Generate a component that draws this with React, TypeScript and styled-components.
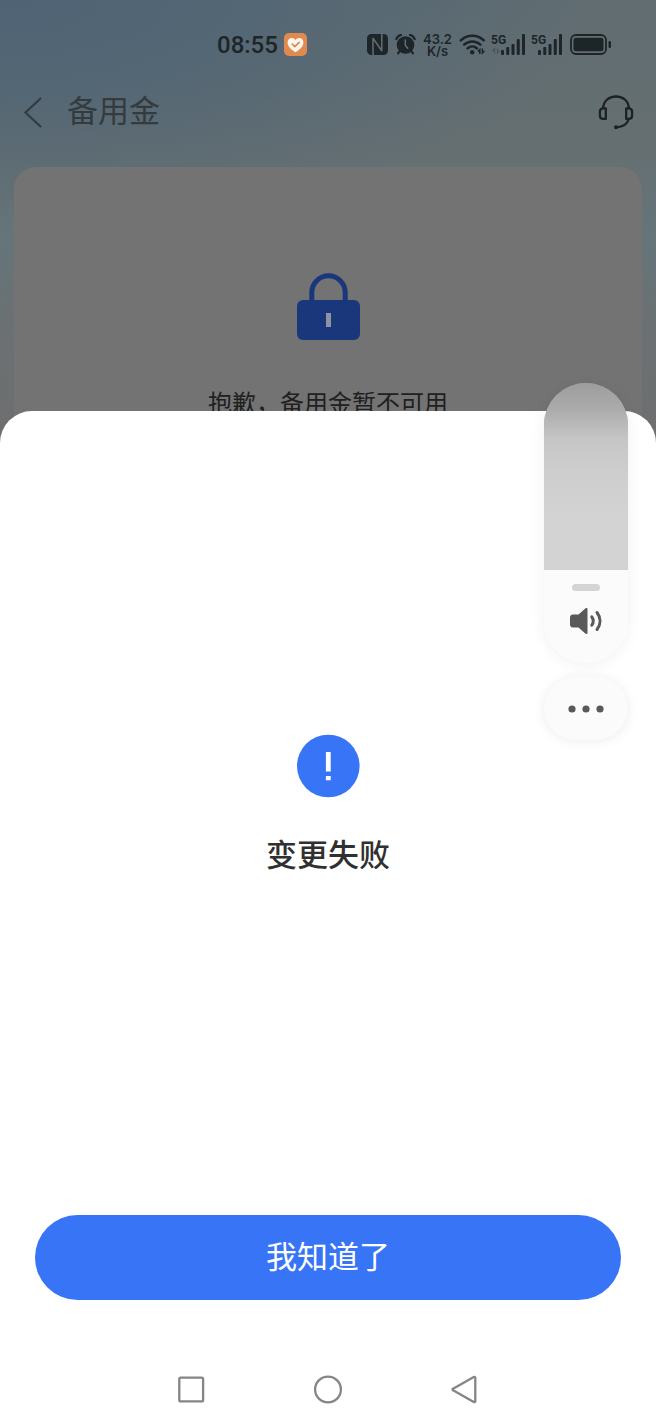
import React, { useState } from "react";
import styled, { createGlobalStyle } from "styled-components";

const GlobalStyle = createGlobalStyle`
  * { box-sizing: border-box; }
  body {
    margin: 0;
    font-family: "Noto Sans CJK SC", "Noto Sans", sans-serif;
  }
  button {
    margin: 0;
    padding: 0;
    border: 0;
    background: none;
    font: inherit;
    color: inherit;
    cursor: pointer;
  }
  svg { display: block; }
`;

const INK = "#1d2529";
const BLUE = "#3875f6";

const Screen = styled.div`
  position: relative;
  min-height: 100vh;
  overflow: hidden;
  background:
    radial-gradient(ellipse 600px 220px at 0 0, #4f6375 0%, rgba(80, 101, 117, 0.8) 40%, rgba(84, 106, 118, 0) 100%),
    linear-gradient(180deg, #616d71 0, #656f72 150px, #65757a 240px, #6b7072 330px, #6d6f70 420px);
`;

const StatusBar = styled.header`
  display: flex;
  align-items: center;
  justify-content: space-between;
  height: 88px;
  padding: 0 45px 0 217px;
  color: ${INK};
`;

const StatusGroup = styled.div`
  display: flex;
  align-items: center;
  gap: 6px;
`;

const Clock = styled.time`
  padding-top: 2px;
  font: 500 24px/28px Roboto, sans-serif;
`;

const Speed = styled.span`
  display: flex;
  flex-direction: column;
  align-items: center;
  width: 31px;
  padding-top: 2px;
  font: 600 13px/12px Inter, sans-serif;
`;

const SignalBox = styled.span`
  position: relative;
`;

const SignalLabel = styled.span`
  position: absolute;
  top: 0;
  left: 0;
  font: 700 12px/12px Roboto, sans-serif;
`;

const NavBar = styled.nav`
  display: flex;
  align-items: center;
  height: 48px;
  padding: 0 20px;
  color: #343b3f;
`;

const PageTitle = styled.h1`
  flex: 1;
  margin: 0 0 0 19px;
  padding-bottom: 6px;
  font-size: 31px;
  line-height: 42px;
  font-weight: 400;
`;

const Card = styled.section`
  display: flex;
  flex-direction: column;
  align-items: center;
  height: 420px;
  margin: 31px 14px 0;
  padding-top: 106px;
  border-radius: 22px;
  background: #737373;
`;

const CardText = styled.p`
  margin: 44px 0 0;
  font-size: 24px;
  line-height: 36px;
  color: #202020;
`;

const Overlay = styled.div`
  position: absolute;
  inset: 0;
  display: flex;
  flex-direction: column;
  padding-top: 411px;
`;

const Sheet = styled.section`
  flex: 1;
  display: flex;
  flex-direction: column;
  border-radius: 32px 32px 0 0;
  background: #fff;
`;

const Result = styled.div`
  flex: 1;
  display: flex;
  flex-direction: column;
  align-items: center;
  justify-content: center;
  gap: 31px;
  padding-bottom: 16px;
`;

const ResultTitle = styled.h2`
  margin: 0;
  font-size: 31px;
  line-height: 48px;
  font-weight: 500;
  color: #303030;
`;

const ConfirmButton = styled.button`
  height: 85px;
  margin: 0 35px;
  padding-bottom: 6px;
  border-radius: 43px;
  background: ${BLUE};
  color: #fff;
  font-size: 31px;
  line-height: 48px;
`;

const SystemNav = styled.nav`
  display: flex;
  justify-content: center;
  gap: 41px;
  height: 124px;
  padding-top: 54px;
`;

const SystemButton = styled.button`
  display: grid;
  place-items: center;
  width: 96px;
  height: 70px;
`;

const VolumePanel = styled.aside`
  position: absolute;
  top: 383px;
  right: 28px;
  display: flex;
  flex-direction: column;
  gap: 14px;
  width: 84px;
`;

const VolumePill = styled.div`
  position: relative;
  overflow: hidden;
  height: 280px;
  border-radius: 42px;
  background: linear-gradient(180deg, #9d9d9d 50%, #fbfbfb 50%);
`;

const VolumeShadow = styled.div`
  border-radius: 42px;
  box-shadow: 0 2px 16px rgba(0, 0, 0, 0.06);
`;

const VolumeEmpty = styled.div`
  height: 187px;
  background: linear-gradient(180deg, #9d9d9d 0, #aaaaaa 24px, #c6c6c6 56px, #cecece 90px, #d3d3d3 130px);
`;

const VolumeFill = styled.div`
  display: flex;
  flex-direction: column;
  align-items: center;
  gap: 16px;
  padding-top: 14px;
`;

const Handle = styled.span`
  width: 28px;
  height: 7px;
  border-radius: 4px;
  background: #d4d4d4;
`;

const VolumeRange = styled.input`
  position: absolute;
  inset: 0;
  width: 100%;
  height: 100%;
  margin: 0;
  opacity: 0;
  writing-mode: vertical-lr;
  direction: rtl;
`;

const MoreButton = styled.button`
  display: grid;
  place-items: center;
  height: 63px;
  border-radius: 32px;
  background: #fbfbfb;
  box-shadow: 0 1px 12px rgba(0, 0, 0, 0.08);
`;

const HealthIcon = () => (
  <svg width="23" height="23" viewBox="0 0 23 23" aria-hidden="true">
    <rect width="23" height="23" rx="5" fill="#e08a50" />
    <path d="M11.5 19.3C7 16.3 3.6 13.2 3.6 9.4c0-2.600 1.900-4.400 4.200-4.400 1.600 0 2.900.8 3.700 2.100.8-1.300 2.100-2.100 3.700-2.100 2.300 0 4.200 1.800 4.200 4.400 0 3.800-3.400 6.900-7.900 9.900z" fill="#fff6ee" />
    <path d="M8.200 11l2.600 2.600 4.400-4.300" fill="none" stroke="#dc8850" strokeWidth="1.700" strokeLinecap="round" strokeLinejoin="round" />
  </svg>
);

const NfcIcon = () => (
  <svg width="21" height="21" viewBox="0 0 21 21" aria-hidden="true">
    <rect width="21" height="21" rx="4.500" fill={INK} />
    <path d="M6 21V4.200L14.800 16.800V0" fill="none" stroke="#606d73" strokeWidth="1.500" strokeLinejoin="round" />
  </svg>
);

const AlarmIcon = () => (
  <svg width="22" height="21" viewBox="-1 0 22 21" aria-hidden="true">
    <circle cx="10.500" cy="11" r="8.800" fill={INK} />
    <path d="M1.300 5.200C2.100 3 3.800 1.400 6 1M19.700 5.200C18.900 3 17.200 1.400 15 1M4.800 17l-1.700 2.400M16.200 17l1.700 2.400" fill="none" stroke={INK} strokeWidth="2.200" strokeLinecap="round" />
    <path d="M10.300 6v5.300l2.400 3" fill="none" stroke="#606d73" strokeWidth="1.500" strokeLinecap="round" />
  </svg>
);

const WifiIcon = () => (
  <svg width="26" height="21" viewBox="0 0 26 21" aria-hidden="true">
    <path d="M1.800 6.300c6.400-6.200 16.600-6.200 23 0M5.200 10.600c4.600-4.300 11.600-4.300 16.200 0M8.700 14.300c2.700-2.400 6.500-2.400 9.200 0" fill="none" stroke={INK} strokeWidth="2.500" strokeLinecap="round" />
    <circle cx="13.200" cy="18.200" r="2.200" fill={INK} />
    <path d="M20.800 20v-4.500l-2 2M23.400 14.500v4.500l2-2" fill="none" stroke={INK} strokeWidth="1.500" />
  </svg>
);

const Signal = ({ width, end, data }: { width: number; end: number; data?: boolean }) => {
  const heights = [5, 8, 11, 16, 21];
  return (
    <SignalBox>
      <SignalLabel>5G</SignalLabel>
      <svg width={width} height="21" viewBox={`0 0 ${width} 21`} aria-hidden="true">
        {heights.map((h, i) => (
          <rect key={h} x={end - 24 + i * 5.250} y={21 - h} width="3" height={h} rx="1" fill={INK} />
        ))}
        {data && <path d="M3.500 19.500v-4.500l-2 2M6.500 14.500v4.500l2-2" fill="none" stroke="#4a565b" strokeWidth="1.300" />}
      </svg>
    </SignalBox>
  );
};

const BatteryIcon = () => (
  <svg width="41" height="21" viewBox="0 0 41 21" aria-hidden="true">
    <rect x="1" y="1" width="35" height="19" rx="5" fill="none" stroke={INK} strokeWidth="1.800" />
    <rect x="3.500" y="3.800" width="30" height="13.400" rx="2.500" fill={INK} />
    <rect x="38.500" y="7" width="2.500" height="7" rx="1.200" fill={INK} />
  </svg>
);

const BackIcon = () => (
  <svg width="28" height="32" viewBox="0 0 28 32" aria-hidden="true">
    <path d="M21 2L5.500 16.500 21 31" fill="none" stroke="currentColor" strokeWidth="2.200" />
  </svg>
);

const HeadsetIcon = () => (
  <svg width="38" height="36" viewBox="0 0 38 36" fill="none" stroke="#1c2124" strokeWidth="2.300" aria-hidden="true">
    <path d="M5.200 14.500C5.200 7.200 10.800 2.500 18 2.500s12.800 4.700 12.800 12" />
    <path d="M7.800 14.300H5.500c-2.400 0-3.600 1.200-3.600 3.500v3.600c0 2.300 1.200 3.500 3.600 3.500h2.300z" strokeLinejoin="round" />
    <path d="M28.200 14.300h2.300c2.400 0 3.600 1.200 3.600 3.500v3.600c0 2.300-1.200 3.500-3.600 3.500h-2.300z" strokeLinejoin="round" />
    <path d="M30.800 25c-1.500 4.800-5.600 8-12.300 8.300" />
    <circle cx="18" cy="33.200" r="1.200" fill="#1c2124" strokeWidth="1.500" />
  </svg>
);

const LockIcon = () => (
  <svg width="64" height="67" viewBox="0 0 64 67" aria-hidden="true">
    <path d="M15.800 30V19.500a16.700 16.700 0 0 1 33.400 0V30" fill="none" stroke="#19377a" strokeWidth="5" />
    <rect x="1" y="27" width="63" height="40" rx="6" fill="#19377a" />
    <rect x="30" y="40" width="5" height="14" fill="#8c93a3" />
  </svg>
);

const NoticeIcon = () => (
  <svg width="64" height="64" viewBox="0 0 64 64" aria-hidden="true">
    <circle cx="32.300" cy="32" r="31.300" fill={BLUE} />
    <path d="M29.900 18h4.800v19.500h-4.800zM29.900 42h4.800v4.300h-4.800z" fill="#fff" />
  </svg>
);

const SpeakerIcon = () => (
  <svg width="34" height="28" viewBox="0 0 34 28" aria-hidden="true">
    <path d="M4 7.500h5.500L16.300 1.400c1-.9 2.200-.5 2.200.9v23.400c0 1.400-1.200 1.800-2.200.9L9.500 20.500H4c-1.800 0-3-1.200-3-3v-7c0-1.800 1.200-3 3-3z" fill="#595959" />
    <path d="M22.800 9.800c1.800 2.600 1.800 5.800 0 8.400M28 5.500c4 5.200 4 11.800 0 17" fill="none" stroke="#595959" strokeWidth="3" strokeLinecap="round" />
  </svg>
);

const MoreIcon = () => (
  <svg width="36" height="8" viewBox="0 0 36 8" fill="#595959" aria-hidden="true">
    <circle cx="4" cy="4" r="3.600" />
    <circle cx="18" cy="4" r="3.600" />
    <circle cx="32" cy="4" r="3.600" />
  </svg>
);

const SystemIcon = ({ children }: { children: React.ReactNode }) => (
  <svg width="30" height="30" viewBox="0 0 30 30" fill="none" stroke="#858585" strokeWidth="2.300" strokeLinejoin="round" aria-hidden="true">
    {children}
  </svg>
);

export default function App() {
  const [volume, setVolume] = useState(33);
  return (
    <>
      <GlobalStyle />
      <Screen>
        <StatusBar>
          <StatusGroup>
            <Clock>08:55</Clock>
            <HealthIcon />
          </StatusGroup>
          <StatusGroup>
            <NfcIcon />
            <AlarmIcon />
            <Speed>
              <span>43.2</span>
              <span>K/s</span>
            </Speed>
            <WifiIcon />
            <Signal width={34} end={34} data />
            <Signal width={33} end={31} />
            <BatteryIcon />
          </StatusGroup>
        </StatusBar>
        <NavBar>
          <button type="button" aria-label="返回">
            <BackIcon />
          </button>
          <PageTitle>备用金</PageTitle>
          <button type="button" aria-label="客服">
            <HeadsetIcon />
          </button>
        </NavBar>
        <Card>
          <LockIcon />
          <CardText>抱歉，备用金暂不可用</CardText>
        </Card>

        <Overlay>
          <Sheet role="dialog" aria-labelledby="result-title">
            <Result>
              <NoticeIcon />
              <ResultTitle id="result-title">变更失败</ResultTitle>
            </Result>
            <ConfirmButton type="button">我知道了</ConfirmButton>
            <SystemNav>
              <SystemButton type="button" aria-label="最近任务">
                <SystemIcon>
                  <rect x="3.300" y="3.600" width="23.800" height="23.800" rx="1.500" />
                </SystemIcon>
              </SystemButton>
              <SystemButton type="button" aria-label="主屏幕">
                <SystemIcon>
                  <circle cx="15" cy="15.500" r="12.900" />
                </SystemIcon>
              </SystemButton>
              <SystemButton type="button" aria-label="后退">
                <SystemIcon>
                  <path d="M23.800 3a1 1 0 0 1 1.500 1v23a1 1 0 0 1-1.500 1L3.500 16.500a1 1 0 0 1 0-2z" />
                </SystemIcon>
              </SystemButton>
            </SystemNav>
          </Sheet>
        </Overlay>

        <VolumePanel>
          <VolumeShadow>
            <VolumePill>
              <VolumeEmpty />
              <VolumeFill>
                <Handle />
                <SpeakerIcon />
              </VolumeFill>
              <VolumeRange
                type="range"
                min={0}
                max={100}
                value={volume}
                aria-label="音量"
                onChange={(e) => setVolume(Number(e.target.value))}
              />
            </VolumePill>
          </VolumeShadow>
          <MoreButton type="button" aria-label="更多">
            <MoreIcon />
          </MoreButton>
        </VolumePanel>
      </Screen>
    </>
  );
}
